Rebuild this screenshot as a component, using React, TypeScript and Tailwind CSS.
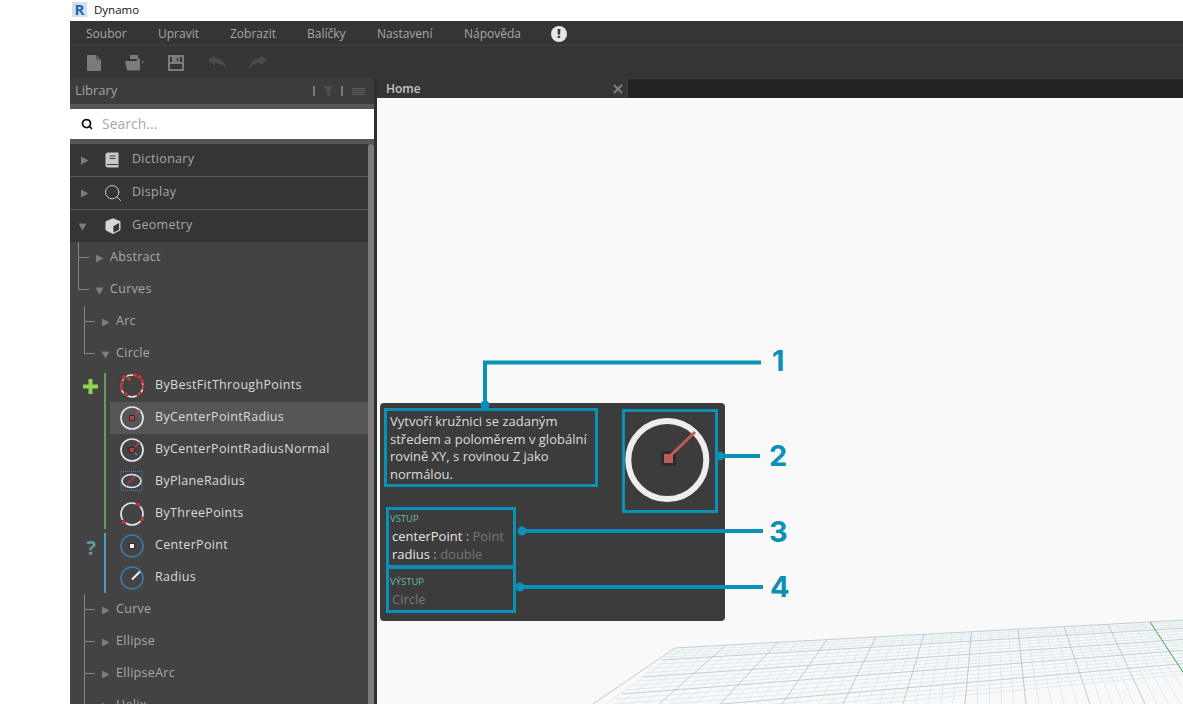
import {Search} from "lucide-react";
import type {ReactNode} from "react";

const font = "font-['Open_Sans','Noto_Sans',sans-serif]";
const menuItems = [
    {label: "Soubor", width: "w-[72px]"},
    {label: "Upravit", width: "w-[72px]"},
    {label: "Zobrazit", width: "w-[77px]"},
    {label: "Balíčky", width: "w-[70px]"},
    {label: "Nastavení", width: "w-[87px]"},
    {label: "Nápověda", width: "w-[88px]"},
];

// grid floor, page coordinates
const topX = [675, 726, 778, 827, 876, 924, 971.5, 1018, 1064, 1108, 1150, 1192];
const bottomX = [593, 659, 720, 782, 843, 903, 965, 1026, 1090, 1145, 1204, 1270];
const leftY = [648, 660, 677, 694, 715, 738];
const topAt = (x: number) => 648 - 0.055 * (x - 675);
const lerp = (a: number, b: number, t: number) => a + (b - a) * t;

function FloorGrid() {
    const depth: ReactNode[] = [];
    const cross: ReactNode[] = [];
    for (let i = 0; i < topX.length - 1; i++) {
        for (let k = 0; k < 5; k++) {
            const t = k / 5;
            const x1 = lerp(topX[i], topX[i + 1], t);
            const x2 = lerp(bottomX[i], bottomX[i + 1], t);
            const green = i === 10 && k === 0;
            depth.push(
                <line key={`d${i}-${k}`} x1={x1} y1={topAt(x1)} x2={x2} y2={704}
                      stroke={green ? "#3aa544" : k === 0 ? "#b2bfc5" : "#d6e6f0"}
                      strokeWidth={green ? 1 : 0.8}/>,
            );
        }
    }
    for (let i = 0; i < leftY.length - 1; i++) {
        for (let k = 0; k < 4; k++) {
            const y = lerp(leftY[i], leftY[i + 1], k / 4);
            const x = 675 - ((y - 648) * 82) / 71;
            const slope = (548 - y) / (2500 - x);
            cross.push(
                <line key={`c${i}-${k}`} x1={x} y1={y} x2={1183} y2={y + slope * (1183 - x)}
                      stroke={k === 0 ? "#b2bfc5" : "#d6e6f0"} strokeWidth={0.8}/>,
            );
        }
    }
    return (
        <svg className="absolute inset-0" width={806} height={606} viewBox="377 98 806 606">
            {cross}
            {depth}
        </svg>
    );
}

function Leaders() {
    const c = "#0b90b6";
    return (
        <svg className="absolute inset-0" width={806} height={606} viewBox="377 98 806 606">
            <path d="M485 405V362.500H761" fill="none" stroke={c} strokeWidth={4}/>
            <circle cx={485} cy={405} r={4.500} fill={c}/>
            <path d="M720 456H760" stroke={c} strokeWidth={4}/>
            <circle cx={720} cy={456} r={4.500} fill={c}/>
            <path d="M522 531H763" stroke={c} strokeWidth={4}/>
            <circle cx={522} cy={531} r={4.500} fill={c}/>
            <path d="M520 587H763" stroke={c} strokeWidth={4}/>
            <circle cx={520} cy={587} r={4.500} fill={c}/>
        </svg>
    );
}

function Tooltip() {
    return (
        <div className="absolute left-[3px] top-[305px] flex h-[218px] w-[345px] items-start rounded-[4px] bg-[#3c3c3c]">
            <div className="w-[218px] pl-[4px] pt-[5px]">
                <div className="h-[79px] w-[214px] border-[3px] border-[#0b90b6] pl-[3px] pt-[2px] text-[13px] leading-[17.500px] text-[#dcdcdc]">
                    Vytvoří kružnici se zadaným středem a poloměrem v globální rovině XY, s rovinou Z jako normálou.
                </div>
                <div className="ml-[2px] mt-[20px] h-[61px] w-[130px] border-[3px] border-[#0b90b6] pl-[1px] pt-[2px]">
                    <div className="text-[9.500px] leading-[13px] text-[#62bda4]">VSTUP</div>
                    <div className="mt-[2px] pl-[2px] text-[13px] leading-[18px]">
                        <span className="text-[#e6e6e6]">centerPoint</span>
                        <span className="text-[#b0b0b0]"> : </span>
                        <span className="text-[#777]">Point</span>
                    </div>
                    <div className="pl-[2px] text-[13px] leading-[18px]">
                        <span className="text-[#e6e6e6]">radius</span>
                        <span className="text-[#b0b0b0]"> : </span>
                        <span className="text-[#777]">double</span>
                    </div>
                </div>
                <div className="ml-[2px] -mt-[2px] h-[47px] w-[130px] border-[3px] border-[#0b90b6] pl-[1px] pt-[6px]">
                    <div className="text-[9.500px] leading-[13px] text-[#62bda4]">VÝSTUP</div>
                    <div className="mt-[2px] pl-[2px] text-[13px] leading-[18px] text-[#777]">Circle</div>
                </div>
            </div>
            <div className="ml-[24px] mt-[6px] h-[104px] w-[96px] border-[3px] border-[#0b90b6]">
                <svg width={90} height={98} viewBox="0 0 90 98">
                    <circle cx={42.300} cy={48} r={39} fill="none" stroke="#eeeeee" strokeWidth={6}/>
                    <rect x={36} y={39} width={15} height={15} fill="#2d2d2d"/>
                    <path d="M43 46L70 20" stroke="#c25a5a" strokeWidth={3}/>
                    <rect x={39} y={42} width={9} height={9} fill="#c25a5a"/>
                </svg>
            </div>
        </div>
    );
}

function CalloutNumber({n, className}: { n: string; className: string }) {
    return (
        <div className={`absolute font-['Inter',sans-serif] text-[29px] font-bold leading-[30px] text-[#0b90b6] ${className}`}>
            {n}
        </div>
    );
}

function Arrow({open}: { open?: boolean }) {
    return (
        <svg width={9} height={9} viewBox="0 0 9 9" className="shrink-0">
            {open
                ? <path d="M0.500 1.500H8.500L4.500 8.500Z" fill="#7d7d7d"/>
                : <path d="M1 0.500V8.500L8.500 4.500Z" fill="#7d7d7d"/>}
        </svg>
    );
}

function BookIcon() {
    return (
        <svg width={14} height={16} viewBox="0 0 14 16">
            <path d="M3 0.500H13.500V15.500H3A2.500 2.500 0 0 1 0.500 13V3A2.500 2.500 0 0 1 3 0.500Z" fill="#c9c9c9"/>
            <path d="M4.500 4H10.500M4.500 6.500H10.500M2 12.500H13" stroke="#3a3a3a" strokeWidth={1.200}/>
        </svg>
    );
}

function CubeIcon() {
    return (
        <svg width={16} height={16} viewBox="0 0 16 16">
            <path d="M8 0.800L15 3.600V12L8 15.500L1 12V3.600Z" fill="#d6d6d6"/>
            <path d="M8 8.200V15L14.200 11.800V4.800Z" fill="#353535"/>
            <path d="M8 8.200V15M14.500 4L8 7.800L1.500 4" fill="none" stroke="#d6d6d6" strokeWidth={0.900}/>
            <path d="M8 0.800L15 3.600V12L8 15.500L1 12V3.600Z" fill="none" stroke="#d6d6d6" strokeWidth={1}/>
        </svg>
    );
}

function CategoryRow({label, icon, open, last}: { label: string; icon: ReactNode; open?: boolean; last?: boolean }) {
    return (
        <div className={`flex items-center bg-[#353535] ${open ? "pl-[8px]" : "pl-[10px]"} ${last ? "h-[32px]" : "h-[33px] border-b border-[#565656]"}`}>
            <Arrow open={open}/>
            <div className={`flex w-[27px] shrink-0 items-center ${open ? "ml-[18px]" : "ml-[16px]"}`}>{icon}</div>
            <span className="-mt-[2px] text-[12.500px] tracking-[0.3px] text-[#a6a6a6]">{label}</span>
        </div>
    );
}

// nested tree row, the connector is a small border elbow
function TreeRow({level, label, open, last}: { level: 1 | 2; label: string; open?: boolean; last?: boolean }) {
    return (
        <div className={`flex h-[32px] items-stretch ${level === 1 ? "pl-[8px]" : "pl-[14px]"}`}>
            <div className="flex w-[11px] shrink-0 flex-col">
                <div className="h-[16px] border-b border-l border-[#868686]"/>
                {!last && <div className="flex-1 border-l border-[#868686]"/>}
            </div>
            <div className="ml-[6px] flex items-center">
                <Arrow open={open}/>
                <span className="-mt-[2px] ml-[6px] text-[12.500px] tracking-[0.3px] text-[#a8a8a8]">{label}</span>
            </div>
        </div>
    );
}

const dots = (pts: number[][]) => pts.map(([x, y], i) => (
    <rect key={i} x={x - 2} y={y - 2} width={4} height={4} fill="#c8393f" stroke="#2e2e2e" strokeWidth={0.500}/>
));

function ItemIcon({name}: { name: string }) {
    const ring = <circle cx={12} cy={12} r={11} fill="none" stroke="#e4e4e4" strokeWidth={1.700}/>;
    const blueRing = <circle cx={12} cy={12} r={11} fill="none" stroke="#3a78ab" strokeWidth={1.600}/>;
    return (
        <svg width={24} height={24} viewBox="0 0 24 24" className="overflow-visible">
            {name === "ByBestFitThroughPoints" && (
                <>
                    <circle cx={12} cy={12} r={11} fill="none" stroke="#e4e4e4" strokeWidth={1.600}/>
                    {dots([[4, 3], [9, 5], [15.500, 1], [20, 3], [2, 9], [22, 7], [1.500, 14], [23, 13], [6, 20], [19, 20]])}
                </>
            )}
            {name === "ByCenterPointRadius" && (
                <>
                    {ring}
                    <path d="M12 12L20 4" stroke="#c8393f" strokeWidth={1.300}/>
                    <rect x={9} y={9} width={6} height={6} fill="#2d2d2d"/>
                    <rect x={10} y={10} width={4} height={4} fill="#c8393f"/>
                </>
            )}
            {name === "ByCenterPointRadiusNormal" && (
                <>
                    {ring}
                    <path d="M12 12L20 4" stroke="#c8393f" strokeWidth={1.300}/>
                    <path d="M12 12L17 17" stroke="#3a8fd0" strokeWidth={1.500}/>
                    <rect x={9} y={9} width={6} height={6} fill="#2d2d2d"/>
                    <rect x={10} y={10} width={4} height={4} fill="#c8393f"/>
                </>
            )}
            {name === "ByPlaneRadius" && (
                <>
                    <rect x={1} y={1.500} width={21} height={19} fill="none" stroke="#3f86bd" strokeWidth={1} strokeDasharray="1 1"/>
                    <ellipse cx={11.500} cy={11} rx={9.500} ry={6.500} fill="none" stroke="#e4e4e4" strokeWidth={1.600}/>
                    <path d="M7.500 13.500L15 6.500" stroke="#c8393f" strokeWidth={1.200}/>
                </>
            )}
            {name === "ByThreePoints" && (
                <>
                    {ring}
                    {dots([[18, 2.500], [22.500, 17], [3.500, 20]])}
                </>
            )}
            {name === "CenterPoint" && (
                <>
                    {blueRing}
                    <rect x={9} y={9} width={6} height={6} fill="#2d2d2d"/>
                    <rect x={10} y={10} width={4} height={4} fill="#f2f2f2"/>
                </>
            )}
            {name === "Radius" && (
                <>
                    {blueRing}
                    <path d="M12 13.500L20 5.500" stroke="#eeeeee" strokeWidth={2}/>
                </>
            )}
        </svg>
    );
}

function ItemRow({name, active}: { name: string; active?: boolean }) {
    return (
        <div className={`ml-[4px] flex h-[32px] items-center pl-[10px] ${active ? "bg-[#565656]" : ""}`}>
            <ItemIcon name={name}/>
            <span className="-mt-[2px] ml-[11px] text-[12.500px] tracking-[0.33px] text-[#dadada]">{name}</span>
        </div>
    );
}

function ItemGroup({gutter, bar, items}: { gutter: ReactNode; bar: string; items: string[] }) {
    return (
        <div className="flex">
            <div className="flex w-[34px] shrink-0 justify-end pr-[6px] pt-[9px]">{gutter}</div>
            <div className={`mb-[1px] mt-[3px] w-[2px] shrink-0 ${bar}`}/>
            <div className="flex-1">
                {items.map((it) => <ItemRow key={it} name={it} active={it === "ByCenterPointRadius"}/>)}
            </div>
        </div>
    );
}

function Toolbar() {
    return (
        <div className="flex h-[32px] items-center bg-[#353535] pl-[17px] pt-[1px]">
            <svg width={14} height={16} viewBox="0 0 14 16">
                <path d="M0 0H9L14 5V16H0Z" fill="#7b7b7b"/>
                <path d="M9 0L14 5H9Z" fill="#5a5a5a"/>
            </svg>
            <svg width={20} height={16} viewBox="0 0 20 16" className="ml-[24px]">
                <path d="M5 0H13V4H5Z" fill="#7b7b7b"/>
                <path d="M0 6H11L13 3.500H15V15.500H2Z" fill="#7b7b7b"/>
                <path d="M16 6H19L18 9Z" fill="#666"/>
            </svg>
            <svg width={16} height={16} viewBox="0 0 16 16" className="ml-[23px]">
                <path d="M1 1H15V15H1Z" fill="none" stroke="#7b7b7b" strokeWidth={2}/>
                <path d="M2 8H14" stroke="#7b7b7b" strokeWidth={2}/>
                <path d="M4 2H12V7H4Z" fill="#7b7b7b"/>
                <path d="M9.500 3V6" stroke="#353535" strokeWidth={1.500}/>
            </svg>
            <svg width={19} height={15} viewBox="0 0 19 15" className="ml-[24px]">
                <path d="M0 5L7 0V3C13 3 17 7 19 15C16 10 12 8 7 8V11Z" fill="#4b4b4b"/>
            </svg>
            <svg width={19} height={15} viewBox="0 0 19 15" className="ml-[21px]">
                <path d="M19 5L12 0V3C6 3 2 7 0 15C3 10 7 8 12 8V11Z" fill="#4b4b4b"/>
            </svg>
        </div>
    );
}

function Sidebar() {
    return (
        <aside className="flex h-full w-[304px] shrink-0 flex-col bg-[#565656]">
            <div className="flex h-[26px] shrink-0 items-center justify-between bg-[#3c3c3c] pl-[5px] pr-[9px]">
                <span className="text-[13px] text-[#a0a0a0]">Library</span>
                <div className="flex items-center">
                    <div className="h-[10px] w-[2px] bg-[#777]"/>
                    <svg width={11} height={10} viewBox="0 0 11 10" className="ml-[8px]">
                        <path d="M0 0H11L7 5V10H4V5Z" fill="#4f4f4f"/>
                    </svg>
                    <div className="ml-[7px] h-[10px] w-[2px] bg-[#777]"/>
                    <div className="ml-[9px] flex w-[13px] flex-col gap-[1px]">
                        <div className="h-[1px] bg-[#5c5c5c]"/>
                        <div className="h-[1px] bg-[#5c5c5c]"/>
                        <div className="h-[1px] bg-[#5c5c5c]"/>
                        <div className="h-[1px] bg-[#5c5c5c]"/>
                    </div>
                </div>
            </div>
            <div className="mt-[5px] flex h-[30px] shrink-0 items-center bg-white pl-[11px]">
                <Search size={12} strokeWidth={3.500} className="text-[#111]"/>
                <span className="-mt-[2px] ml-[9px] text-[14px] text-[#a8a8a8]">Search...</span>
            </div>
            <div className="mt-[5px] flex min-h-0 flex-1 overflow-hidden bg-[#434343]">
                <div className="min-w-0 flex-1">
                    <CategoryRow label="Dictionary" icon={<BookIcon/>}/>
                    <CategoryRow label="Display" icon={<Search size={20} strokeWidth={1.200} className="-ml-[2px] text-[#c9c9c9]"/>}/>
                    <CategoryRow label="Geometry" open last icon={<CubeIcon/>}/>
                    <TreeRow level={1} label="Abstract"/>
                    <TreeRow level={1} label="Curves" open last/>
                    <TreeRow level={2} label="Arc"/>
                    <TreeRow level={2} label="Circle" open last/>
                    <ItemGroup
                        bar="bg-[#6b9a5e]"
                        gutter={
                            <svg width={15} height={15} viewBox="0 0 15 15">
                                <path d="M5.500 0H9.500V5.500H15V9.500H9.500V15H5.500V9.500H0V5.500H5.500Z" fill="#8ed44f"/>
                            </svg>
                        }
                        items={["ByBestFitThroughPoints", "ByCenterPointRadius", "ByCenterPointRadiusNormal", "ByPlaneRadius", "ByThreePoints"]}
                    />
                    <ItemGroup
                        bar="bg-[#4a9dc8]"
                        gutter={<span className="-mt-[3px] mr-[2px] text-[20px] font-bold leading-[24px] text-[#5d9c9c]">?</span>}
                        items={["CenterPoint", "Radius"]}
                    />
                    <TreeRow level={2} label="Curve"/>
                    <TreeRow level={2} label="Ellipse"/>
                    <TreeRow level={2} label="EllipseArc"/>
                    <TreeRow level={2} label="Helix"/>
                </div>
                <div className="h-full w-[6px] shrink-0 rounded-t-[3px] bg-[#7b7b7b]"/>
            </div>
        </aside>
    );
}

export default function App() {
    return (
        <div className={`flex h-[704px] w-[1183px] overflow-hidden bg-white ${font}`}>
            <div className="w-[70px] shrink-0"/>
            <div className="flex min-w-0 flex-1 flex-col">
                <div className="flex h-[21px] shrink-0 items-center bg-white pb-[2px] pl-[2px]">
                    <div className="flex h-[15px] w-[15px] items-center justify-center bg-[#cfe0ef] text-[15px] font-bold leading-none text-[#2a63a8]">R</div>
                    <span className="ml-[7px] text-[11.500px] text-[#111]">Dynamo</span>
                </div>
                <div className="flex h-[25px] shrink-0 items-center border-b border-[#414141] bg-[#353535] pl-[16px] pt-[1px]">
                    {menuItems.map((m) => (
                        <div key={m.label} className={`${m.width} text-[12px] text-[#a6a6a6]`}>{m.label}</div>
                    ))}
                    <div className="ml-[-1px] flex h-[16px] w-[16px] items-center justify-center rounded-full bg-[#e6e6e6] text-[13px] font-extrabold leading-none text-[#333]">!</div>
                </div>
                <Toolbar/>
                <div className="flex min-h-0 flex-1">
                    <Sidebar/>
                    <div className="w-[3px] shrink-0 bg-[#2e2e2e]"/>
                    <div className="flex min-w-0 flex-1 flex-col">
                        <div className="flex h-[20px] shrink-0 bg-[#353535]">
                            <div className="flex w-[250px] items-center justify-between pl-[9px] pr-[4px] pt-[1px]">
                                <span className="text-[12px] font-semibold text-[#c4c4c4]">Home</span>
                                <svg width={10} height={10} viewBox="0 0 10 10">
                                    <path d="M1 1L9 9M9 1L1 9" stroke="#7d7d7d" strokeWidth={2}/>
                                </svg>
                            </div>
                            <div className="flex-1 border-l border-t border-[#3c3c3c] bg-[#222]"/>
                        </div>
                        <div className="min-h-0 flex-1 bg-[#f9f9f9]"/>
                    </div>
                </div>
            </div>
            <div className="pointer-events-none absolute left-[377px] top-[98px] h-[606px] w-[806px] overflow-hidden">
                <FloorGrid/>
                <Tooltip/>
                <Leaders/>
                <CalloutNumber n="1" className="left-[395px] top-[248px]"/>
                <CalloutNumber n="2" className="left-[392px] top-[343px]"/>
                <CalloutNumber n="3" className="left-[392px] top-[419px]"/>
                <CalloutNumber n="4" className="left-[393px] top-[474px]"/>
            </div>
        </div>
    );
}
